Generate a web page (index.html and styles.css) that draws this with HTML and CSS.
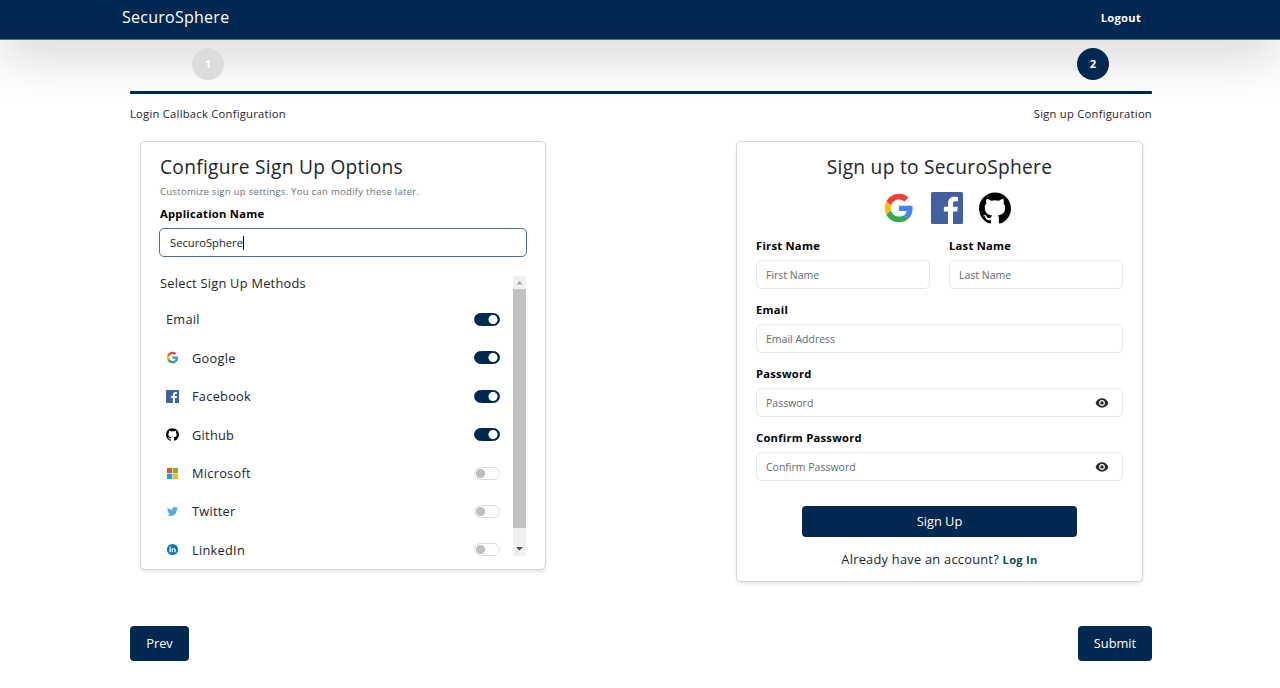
FILE: index.html
```html
<!DOCTYPE html>
<html lang="en">
<head>
<meta charset="utf-8">
<title>SecuroSphere</title>
<link rel="stylesheet" href="styles.css">
</head>
<body>
<svg class="sprite" aria-hidden="true">
  <symbol id="google" viewBox="-3 -3 54 54">
    <path fill="#EA4335" d="M24 9.5c3.54 0 6.71 1.22 9.21 3.6l6.85-6.85C35.9 2.38 30.47 0 24 0 14.62 0 6.51 5.38 2.56 13.22l7.98 6.19C12.43 13.72 17.74 9.5 24 9.5z"/>
    <path fill="#4285F4" d="M46.98 24.55c0-1.57-.15-3.09-.38-4.55H24v9.02h12.94c-.58 2.96-2.26 5.48-4.78 7.18l7.73 6c4.51-4.18 7.09-10.36 7.09-17.65z"/>
    <path fill="#FBBC05" d="M10.53 28.59c-.48-1.45-.76-2.99-.76-4.59s.27-3.14.76-4.59l-7.98-6.19C.92 16.46 0 20.12 0 24c0 3.88.92 7.54 2.56 10.78l7.97-6.19z"/>
    <path fill="#34A853" d="M24 48c6.48 0 11.93-2.13 15.89-5.81l-7.73-6c-2.15 1.45-4.92 2.3-8.16 2.3-6.26 0-11.57-4.22-13.47-9.91l-7.98 6.19C6.51 42.62 14.62 48 24 48z"/>
  </symbol>
  <symbol id="facebook" viewBox="0 0 32 32">
    <rect width="32" height="32" rx="1.5" fill="#4460a0"/>
    <path fill="#fff" d="M17 32V19.6h-4.1v-4.8H17v-3.6C17 7 19.500 4.800 23.200 4.800c1.800 0 3.300.1 3.800.2v4.300h-2.600c-2 0-2.400 1-2.400 2.400v3.100h4.800l-.6 4.800H22V32z"/>
  </symbol>
  <symbol id="github" viewBox="0 0 24 24">
    <path fill="#000" d="M12 .297c-6.63 0-12 5.373-12 12 0 5.303 3.438 9.8 8.205 11.385.6.113.82-.258.82-.577 0-.285-.01-1.04-.015-2.04-3.338.724-4.042-1.61-4.042-1.61C4.422 18.07 3.633 17.7 3.633 17.7c-1.087-.744.084-.729.084-.729 1.205.084 1.838 1.236 1.838 1.236 1.07 1.835 2.809 1.305 3.495.998.108-.776.417-1.305.76-1.605-2.665-.3-5.466-1.332-5.466-5.93 0-1.31.465-2.38 1.235-3.22-.135-.303-.54-1.523.105-3.176 0 0 1.005-.322 3.3 1.23.96-.267 1.98-.399 3-.405 1.02.006 2.04.138 3 .405 2.28-1.552 3.285-1.23 3.285-1.23.645 1.653.24 2.873.12 3.176.765.84 1.23 1.91 1.23 3.22 0 4.61-2.805 5.625-5.475 5.92.42.36.81 1.096.81 2.22 0 1.606-.015 2.896-.015 3.286 0 .315.21.69.825.57C20.565 22.092 24 17.592 24 12.297c0-6.627-5.373-12-12-12"/>
  </symbol>
  <symbol id="microsoft" viewBox="0 0 26 26">
    <path fill="#f25022" d="M2 2h10.300v10.300H2z"/><path fill="#7fba00" d="M13.700 2H24v10.300H13.700z"/>
    <path fill="#00a4ef" d="M2 13.700h10.300V24H2z"/><path fill="#ffb900" d="M13.700 13.700H24V24H13.700z"/>
  </symbol>
  <symbol id="twitter" viewBox="-2 -2 28 28">
    <path fill="#55acde" d="M23.953 4.570a10 10 0 01-2.825.775 4.958 4.958 0 002.163-2.723c-.951.555-2.005.959-3.127 1.184a4.920 4.920 0 00-8.384 4.482C7.690 8.095 4.067 6.130 1.640 3.162a4.822 4.822 0 00-.666 2.475c0 1.710.870 3.213 2.188 4.096a4.904 4.904 0 01-2.228-.616v.060a4.923 4.923 0 003.946 4.827 4.996 4.996 0 01-2.212.085 4.936 4.936 0 004.604 3.417 9.867 9.867 0 01-6.102 2.105c-.390 0-.779-.023-1.170-.067a13.995 13.995 0 007.557 2.209c9.053 0 13.998-7.496 13.998-13.985 0-.210 0-.420-.015-.630A9.935 9.935 0 0024 4.590z"/>
  </symbol>
  <symbol id="linkedin" viewBox="-2 -2 28 28">
    <circle cx="12" cy="12" r="12" fill="#0a78b5"/>
    <path fill="#fff" d="M5.500 9.500h2.800v8.300H5.500zM5.300 6.900a1.600 1.600 0 1 0 3.200 0a1.600 1.600 0 1 0-3.200 0zM10 9.500h2.700v1.200c.5-.8 1.500-1.400 2.800-1.400 2.600 0 3.300 1.700 3.300 4v4.500H16v-4c0-1.200-.2-2.200-1.500-2.200s-1.700 1-1.700 2.100v4.100H10z"/>
  </symbol>
  <symbol id="eye" viewBox="0 0 24 24">
    <path fill="#2b2b2b" d="M12 4C7 4 2.730 7.300 1 12c1.730 4.700 6 8 11 8s9.270-3.300 11-8c-1.730-4.700-6-8-11-8zm0 13c-2.760 0-5-2.240-5-5s2.240-5 5-5 5 2.240 5 5-2.240 5-5 5zm0-8c-1.660 0-3 1.340-3 3s1.340 3 3 3 3-1.340 3-3-1.340-3-3-3z"/>
  </symbol>
</svg>

<header class="navbar">
  <span class="brand">SecuroSphere</span>
  <a class="logout">Logout</a>
</header>

<main class="page">
  <div class="steps"><span class="step step-done">1</span><span class="step">2</span></div>
  <div class="progress"></div>
  <div class="step-labels"><span>Login Callback Configuration</span><span>Sign up Configuration</span></div>

  <div class="cards">
    <section class="card card-options">
      <h1 class="title">Configure Sign Up Options</h1>
      <p class="hint">Customize sign up settings. You can modify these later.</p>
      <label class="label">Application Name</label>
      <div class="input input-focus"><span>SecuroSphere</span><i class="caret"></i></div>
      <div class="scroller">
        <div class="methods">
          <p class="methods-title">Select Sign Up Methods</p>
          <div class="method"><span class="name">Email</span><i class="switch on"></i></div>
          <div class="method"><svg class="icon"><use href="#google"/></svg><span class="name">Google</span><i class="switch on"></i></div>
          <div class="method"><svg class="icon"><use href="#facebook"/></svg><span class="name">Facebook</span><i class="switch on"></i></div>
          <div class="method"><svg class="icon"><use href="#github"/></svg><span class="name">Github</span><i class="switch on"></i></div>
          <div class="method"><svg class="icon"><use href="#microsoft"/></svg><span class="name">Microsoft</span><i class="switch"></i></div>
          <div class="method"><svg class="icon"><use href="#twitter"/></svg><span class="name">Twitter</span><i class="switch"></i></div>
          <div class="method"><svg class="icon"><use href="#linkedin"/></svg><span class="name">LinkedIn</span><i class="switch"></i></div>
        </div>
        <div class="scrollbar">
          <svg class="arrow" viewBox="0 0 13 13"><path fill="#a0a0a0" d="M3.500 8.500 6.500 5l3 3.500z"/></svg>
          <div class="thumb"></div>
          <svg class="arrow arrow-down" viewBox="0 0 13 13"><path fill="#444" d="M3.300 5h6.400L6.500 8.500z"/></svg>
        </div>
      </div>
    </section>

    <section class="card card-preview">
      <h2 class="title title-center">Sign up to SecuroSphere</h2>
      <div class="providers">
        <svg class="provider"><use href="#google"/></svg>
        <svg class="provider"><use href="#facebook"/></svg>
        <svg class="provider"><use href="#github"/></svg>
      </div>
      <div class="row">
        <div class="field"><label class="label">First Name</label><div class="input">First Name</div></div>
        <div class="field"><label class="label">Last Name</label><div class="input">Last Name</div></div>
      </div>
      <div class="field"><label class="label">Email</label><div class="input">Email Address</div></div>
      <div class="field"><label class="label">Password</label><div class="input">Password<svg class="eye"><use href="#eye"/></svg></div></div>
      <div class="field"><label class="label">Confirm Password</label><div class="input">Confirm Password<svg class="eye"><use href="#eye"/></svg></div></div>
      <button class="btn btn-signup">Sign Up</button>
      <p class="login">Already have an account? <a class="login-link">Log In</a></p>
    </section>
  </div>

  <div class="actions"><button class="btn btn-prev">Prev</button><button class="btn btn-submit">Submit</button></div>
</main>
</body>
</html>
```
FILE: styles.css
```css
* { box-sizing: border-box; }
body {
  margin: 0;
  height: 688px;
  overflow: hidden;
  background: #fff;
  color: #212529;
  font-family: "Open Sans", "Noto Sans", sans-serif;
  font-size: 12.8px;
  letter-spacing: 0.26px;
}
h1, h2, p { margin: 0; font-weight: 400; }
.sprite { display: none; }

.navbar {
  display: flex;
  justify-content: space-between;
  align-items: center;
  height: 40px;
  padding: 0 139px 5px 122px;
  background: #002850;
  border-bottom: 1px solid #53708f;
  color: #fff;
  box-shadow: 0 16px 48px rgba(0, 0, 0, 0.175);
}
.brand { font-size: 16px; }
.logout { font-size: 11.2px; font-weight: 700; }

.page { padding: 7.500px 128px 0 130px; }
.steps { display: flex; justify-content: space-between; padding: 0 43px 0 62px; }
.step {
  width: 32px;
  height: 32px;
  border-radius: 50%;
  background: #002850;
  color: #fff;
  font-size: 11.2px;
  font-weight: 700;
  line-height: 32px;
  text-align: center;
}
.step-done { background: #dcdcdc; }
.progress { height: 3px; margin-top: 11.500px; background: #002850; border-radius: 1px; }
.step-labels { display: flex; justify-content: space-between; margin-top: 10px; font-size: 11.2px; line-height: 20px; }

.cards { display: flex; justify-content: space-between; align-items: flex-start; padding: 0 9px 0 10px; margin-top: 17px; height: 484.500px; }
.card {
  display: flex;
  flex-direction: column;
  width: 407px;
  padding: 0 19px;
  border: 1px solid #d2d4d6;
  border-radius: 5px;
  background: #fff;
  box-shadow: 0 1.6px 3.2px rgba(0, 0, 0, 0.1);
}
.card-options { width: 406px; height: 429px; }
.card-preview { height: 441px; }
.title { font-size: 19.2px; line-height: 24px; margin-top: 13px; }
.title-center { text-align: center; }
.hint { font-size: 9.6px; line-height: 14px; margin-top: 6px; color: #6c757d; letter-spacing: 0.25px; }
.label { display: block; font-size: 11.2px; font-weight: 700; line-height: 16px; color: #000; }
.card-options .label { margin-top: 7px; }
.input {
  display: flex;
  align-items: center;
  height: 29px;
  margin-top: 6px;
  padding: 0 9px;
  border: 1px solid #e6e7e8;
  border-radius: 5px;
  color: #636b72;
  font-size: 10.5px;
  letter-spacing: 0;
}
.input-focus { border-color: #4c709c; color: #212529; font-size: 11.2px; padding-left: 10px; margin-left: -1px; margin-right: -0.600px; }
.caret { width: 1px; height: 14px; background: #000; }

.scroller { display: flex; justify-content: space-between; height: 280px; margin-top: 19px; overflow: hidden; }
.methods { width: 340px; padding-left: 6px; }
.methods-title { line-height: 20px; margin: -3px 0 7.300px -6px; }
.method { display: flex; align-items: center; height: 38.400px; }
.icon { width: 13px; height: 13px; margin-right: 13px; }
.name { flex: 1; }
.switch { width: 26px; height: 13px; border: 1px solid #dcdcdc; border-radius: 7px; background: radial-gradient(circle at 5.500px 5.500px, #bfbfbf 4.200px, transparent 4.900px); }
.switch.on { border-color: #002850; background: radial-gradient(circle at 18px 5.500px, #fff 4.200px, #002850 4.900px); }
.scrollbar { display: flex; flex-direction: column; width: 13px; background: #f1f1f1; }
.arrow { width: 13px; height: 13px; }
.thumb { height: 239px; background: #c1c1c1; }
.arrow-down { margin-top: auto; margin-bottom: 1px; }

.providers { display: flex; justify-content: center; gap: 16px; margin: 13px 0 14px; padding-left: 15px; }
.provider { width: 32px; height: 32px; }
.row { display: grid; grid-template-columns: 1fr 1fr; gap: 19px; }
.field { margin-bottom: 13px; }
.eye { width: 14px; height: 14px; margin-left: auto; margin-right: 4px; }
.btn {
  padding: 0;
  border: 0;
  border-radius: 4px;
  background: #002850;
  color: #fff;
  font: inherit;
  letter-spacing: 0;
}
.btn-signup { width: 275px; height: 31px; margin: 12px auto 0; padding-bottom: 1px; }
.login { margin-top: 12px; line-height: 20px; text-align: center; }
.login-link { color: #0f4c55; font-size: 11.2px; font-weight: 700; }
.actions { display: flex; justify-content: space-between; }
.btn-prev { width: 59px; height: 35px; }
.btn-submit { width: 74px; height: 35px; }
```
